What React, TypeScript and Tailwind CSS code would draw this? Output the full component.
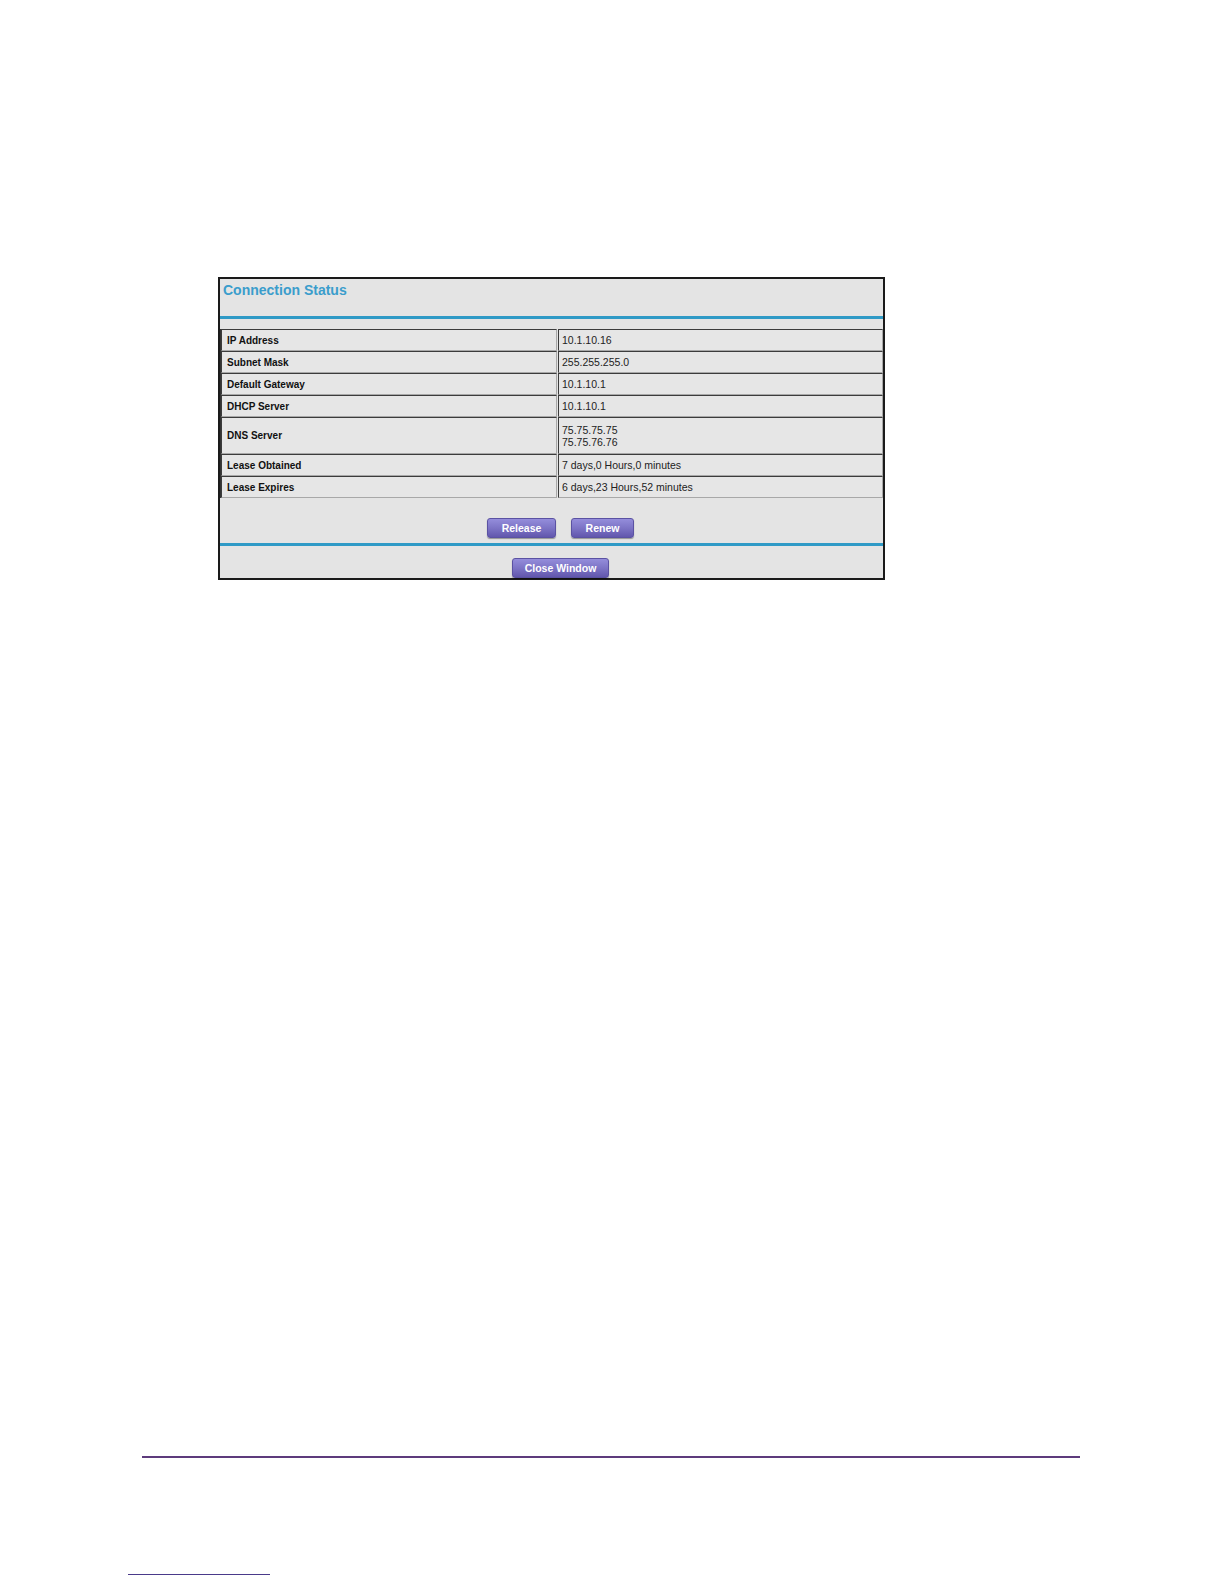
import React from "react";

const rows: { label: string; value: string[]; tall?: boolean }[] = [
  { label: "IP Address", value: ["10.1.10.16"] },
  { label: "Subnet Mask", value: ["255.255.255.0"] },
  { label: "Default Gateway", value: ["10.1.10.1"] },
  { label: "DHCP Server", value: ["10.1.10.1"] },
  { label: "DNS Server", value: ["75.75.75.75", "75.75.76.76"], tall: true },
  { label: "Lease Obtained", value: ["7 days,0 Hours,0 minutes"] },
  { label: "Lease Expires", value: ["6 days,23 Hours,52 minutes"] },
];

function Btn({ label, w }: { label: string; w: string }) {
  return (
    <div
      className={`${w} h-[20px] rounded-[3px] border border-[#5b52a3] bg-gradient-to-b from-[#948ddb] via-[#7d74c6] to-[#6257ad] shadow-[0_1px_1px_rgba(0,0,0,0.35)] flex items-center justify-center text-white font-bold text-[10.5px] leading-none`}
      style={{ fontFamily: '"Liberation Sans", Arial, sans-serif' }}
    >
      {label}
    </div>
  );
}

export default function App() {
  return (
    <div
      className="w-[1224px] h-[1584px] bg-white overflow-hidden"
      style={{ fontFamily: '"Liberation Sans", Arial, sans-serif' }}
    >
      <div className="pt-[277px] pl-[218px]">
        <div className="w-[667px] border-2 border-[#1a1a1a] bg-[#e4e4e4] flex flex-col">
          <div className="h-[37px] pt-[3px] pl-[3px]">
            <div className="text-[14px] leading-[16px] font-bold text-[#3a9dcc]">
              Connection Status
            </div>
          </div>
          <div className="h-[3px] bg-[#2f9ac6]" />
          <div className="mt-[10px] flex flex-col border-l border-[#333]">
            {rows.map((r) => (
              <div
                key={r.label}
                className={`grid grid-cols-[336px_1fr] gap-[1px] ${r.tall ? "h-[37px]" : "h-[22px]"}`}
              >
                <div className="border-t border-l border-b border-r border-t-[#3c3c3c] border-l-[#3c3c3c] border-b-[#a8a8a8] border-r-[#a8a8a8] bg-[#e6e6e6] flex items-center pl-[5px] text-[10px] font-bold text-[#111]">
                  {r.label}
                </div>
                <div className="border-t border-l border-b border-r border-t-[#3c3c3c] border-l-[#3c3c3c] border-b-[#a8a8a8] border-r-[#a8a8a8] bg-[#e6e6e6] flex flex-col justify-center pl-[3px] text-[10.5px] leading-[12px] text-[#222]">
                  {r.value.map((v) => (
                    <div key={v}>{v}</div>
                  ))}
                </div>
              </div>
            ))}
          </div>
          <div className="mt-[20px] flex justify-center gap-[15px] pl-[18px]">
            <Btn label="Release" w="w-[69px]" />
            <Btn label="Renew" w="w-[63px]" />
          </div>
          <div className="mt-[5px] h-[3px] bg-[#2f9ac6]" />
          <div className="mt-[12px] flex justify-center pl-[18px]">
            <Btn label="Close Window" w="w-[97px]" />
          </div>
        </div>
      </div>
      <div className="mt-[876px] ml-[142px] w-[938px] h-[2px] bg-[#5d3b7c]" />
      <div className="mt-[116px] ml-[128px] w-[142px] h-[1px] bg-[#4a3a8a]" />
    </div>
  );
}
